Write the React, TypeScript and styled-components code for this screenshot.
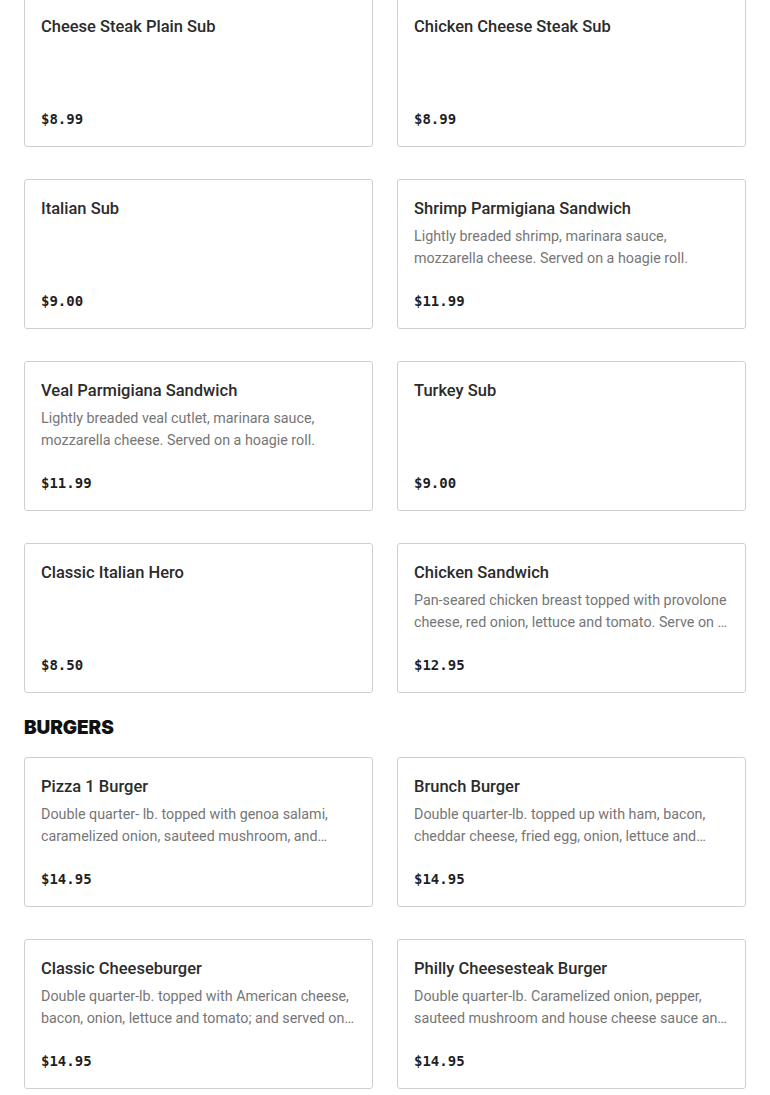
import React from 'react';
import styled, { createGlobalStyle } from 'styled-components';

const GlobalStyle = createGlobalStyle`
  html, body {
    margin: 0;
    padding: 0;
    background: #fff;
  }
  body {
    font-family: Roboto, 'Noto Sans', sans-serif;
    color: #2b2b2b;
  }
`;

const Page = styled.main`
  padding: 0 24px;
  margin-top: -3px;
`;

const Section = styled.section`
  display: flex;
  flex-direction: column;
`;

const SectionTitle = styled.h2`
  margin: 23px 0 17px;
  font-family: Inter, 'Liberation Sans', sans-serif;
  font-size: 19px;
  line-height: 24px;
  font-weight: 900;
  letter-spacing: -0.1px;
  color: #111;
`;

const Grid = styled.div`
  display: grid;
  grid-template-columns: 1fr 1fr;
  column-gap: 24px;
  row-gap: 32px;
`;

const Card = styled.article`
  height: 150px;
  box-sizing: border-box;
  padding: 17px 16px 15px;
  border: 1px solid #cfcfcf;
  border-radius: 3px;
  background: #fff;
  display: flex;
  flex-direction: column;
`;

const Name = styled.h3`
  margin: 0;
  font-size: 16.5px;
  line-height: 24px;
  font-weight: 500;
  color: #2b2b2b;
  white-space: nowrap;
  overflow: hidden;
  text-overflow: ellipsis;
`;

const Description = styled.p`
  margin: 4px 0 0;
  font-size: 14.3px;
  line-height: 22px;
  color: #767676;
  display: -webkit-box;
  -webkit-line-clamp: 2;
  -webkit-box-orient: vertical;
  overflow: hidden;
`;

const Price = styled.span`
  margin-top: auto;
  font-family: 'DejaVu Sans Mono', 'Liberation Mono', monospace;
  font-size: 14px;
  line-height: 24px;
  font-weight: 700;
  color: #1f1f1f;
`;

type Item = { name: string; price: string; description?: string };

const subs: Item[] = [
  { name: 'Cheese Steak Plain Sub', price: '$8.99' },
  { name: 'Chicken Cheese Steak Sub', price: '$8.99' },
  { name: 'Italian Sub', price: '$9.00' },
  {
    name: 'Shrimp Parmigiana Sandwich',
    price: '$11.99',
    description: 'Lightly breaded shrimp, marinara sauce, mozzarella cheese. Served on a hoagie roll.',
  },
  {
    name: 'Veal Parmigiana Sandwich',
    price: '$11.99',
    description: 'Lightly breaded veal cutlet, marinara sauce, mozzarella cheese. Served on a hoagie roll.',
  },
  { name: 'Turkey Sub', price: '$9.00' },
  { name: 'Classic Italian Hero', price: '$8.50' },
  {
    name: 'Chicken Sandwich',
    price: '$12.95',
    description:
      'Pan-seared chicken breast topped with provolone cheese, red onion, lettuce and tomato. Serve on a toasted brioche bun.',
  },
];

const burgers: Item[] = [
  {
    name: 'Pizza 1 Burger',
    price: '$14.95',
    description:
      'Double quarter- lb. topped with genoa salami, caramelized onion, sauteed mushroom, and provolone cheese; served on a brioche bun.',
  },
  {
    name: 'Brunch Burger',
    price: '$14.95',
    description:
      'Double quarter-lb. topped up with ham, bacon, cheddar cheese, fried egg, onion, lettuce and tomato; served on a brioche bun.',
  },
  {
    name: 'Classic Cheeseburger',
    price: '$14.95',
    description:
      'Double quarter-lb. topped with American cheese, bacon, onion, lettuce and tomato; and served on a brioche bun.',
  },
  {
    name: 'Philly Cheesesteak Burger',
    price: '$14.95',
    description:
      'Double quarter-lb. Caramelized onion, pepper, sauteed mushroom and house cheese sauce and served on a brioche bun.',
  },
];

const MenuCard: React.FC<{ item: Item }> = ({ item }) => (
  <Card>
    <Name>{item.name}</Name>
    {item.description && <Description>{item.description}</Description>}
    <Price>{item.price}</Price>
  </Card>
);

const App: React.FC = () => (
  <>
    <GlobalStyle />
    <Page>
      <Section>
        <Grid>
          {subs.map((item) => (
            <MenuCard key={item.name} item={item} />
          ))}
        </Grid>
      </Section>
      <Section>
        <SectionTitle>BURGERS</SectionTitle>
        <Grid>
          {burgers.map((item) => (
            <MenuCard key={item.name} item={item} />
          ))}
        </Grid>
      </Section>
    </Page>
  </>
);

export default App;
